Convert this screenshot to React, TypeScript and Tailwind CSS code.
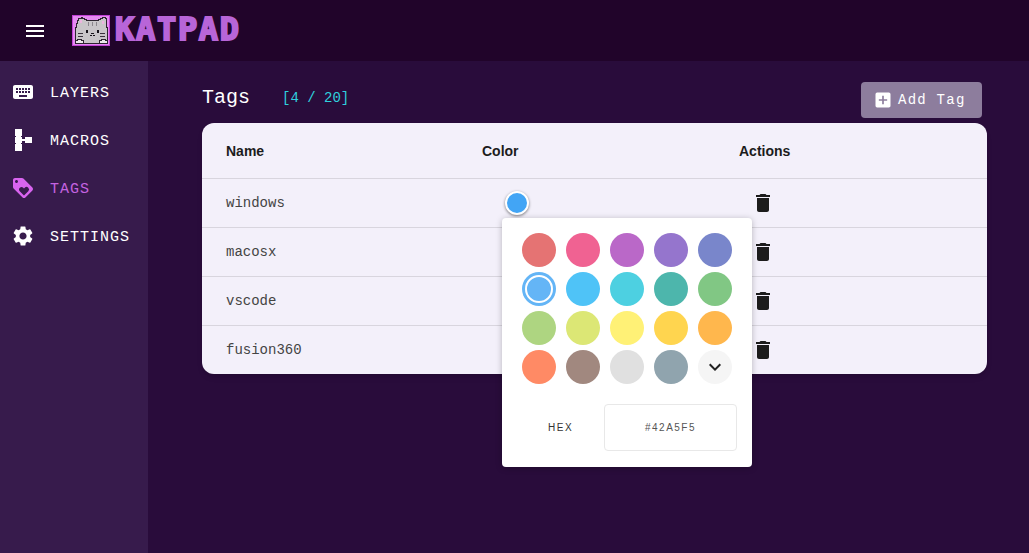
import { MdMenu, MdKeyboard, MdLoyalty, MdSettings, MdDelete, MdAddBox, MdKeyboardArrowDown } from "react-icons/md";

const navItems = [
    { label: "LAYERS", icon: <MdKeyboard size={24} /> },
    { label: "MACROS", icon: <MacroIcon /> },
    { label: "TAGS", icon: <MdLoyalty size={24} />, active: true },
    { label: "SETTINGS", icon: <MdSettings size={24} /> },
];

const tags = ["windows", "macosx", "vscode", "fusion360"];

const swatches = [
    "bg-[#e57373]", "bg-[#f06292]", "bg-[#ba68c8]", "bg-[#9575cd]", "bg-[#7986cb]",
    "selected", "bg-[#4fc3f7]", "bg-[#4dd0e1]", "bg-[#4db6ac]", "bg-[#81c784]",
    "bg-[#aed581]", "bg-[#dce775]", "bg-[#fff176]", "bg-[#ffd54f]", "bg-[#ffb74d]",
    "bg-[#ff8a65]", "bg-[#a1887f]", "bg-[#e0e0e0]", "bg-[#90a4ae]", "more",
];

function MacroIcon() {
    return (
        <svg width="24" height="24" viewBox="0 0 24 24" fill="currentColor" shapeRendering="crispEdges">
            <rect x="4" y="1" width="7" height="7" />
            <rect x="5" y="8" width="5" height="1" />
            <rect x="4" y="9" width="7" height="6" />
            <rect x="5" y="15" width="5" height="1" />
            <rect x="4" y="16" width="7" height="7" />
            <rect x="11" y="11" width="3" height="2" />
            <rect x="14" y="9" width="7" height="6" />
        </svg>
    );
}

function CatLogo() {
    return (
        <svg width="38" height="31" viewBox="0 0 38 31" shapeRendering="crispEdges" className="shrink-0">
            <rect x="0.5" y="0.5" width="37" height="30" fill="#e58bf2" stroke="#c23fd6" />
            <path d="M3 28v-16h1v-4h1v-3h1v-2h3v-1h1v1h2v1h2v1h12v-1h2v-1h2v-1h3v1h1v9h1v16z" fill="#c9c5c9" stroke="#2d2430" strokeWidth="1" />
            <path d="M3 28v-3h2v-1h4v1h2v3zM27 28v-3h2v-1h4v1h2v3z" fill="#ece9ec" stroke="#2d2430" strokeWidth="1" />
            <path d="M8 5h2v3h-2zM30 6h2v3h-2z" fill="#ecb4df" />
            <path d="M16 7h1v4h-1zM20 7h1v4h-1zM24 7h1v4h-1z" fill="#8b868d" />
            <path d="M14 15h2v3h-2zM25 15h2v3h-2z" fill="#17121a" />
            <path d="M19 18h3v1h-3zM18 20h2v1h-2zM21 20h2v1h-2z" fill="#17121a" />
            <path d="M6 18h5v1h-5zM6 21h5v1h-5zM28 18h5v1h-5zM28 21h5v1h-5z" fill="#3a323d" />
        </svg>
    );
}

function ColorPopover() {
    return (
        <div className="absolute left-[300px] top-[95px] z-10 w-[250px] h-[249px] rounded bg-white shadow-[0_1px_6px_rgba(0,0,0,0.25)] flex flex-col pt-[15px] pl-5 pr-[15px]">
            <div className="grid grid-cols-[repeat(5,34px)] gap-x-[10px] gap-y-[5px]">
                {swatches.map((s) =>
                    s === "selected" ? (
                        <div key={s} className="w-[34px] h-[34px] rounded-full bg-[#64b5f6] flex items-center justify-center">
                            <div className="w-[28px] h-[28px] rounded-full border-2 border-white" />
                        </div>
                    ) : s === "more" ? (
                        <div key={s} className="w-[34px] h-[34px] rounded-full bg-[#f5f5f5] flex items-center justify-center text-[#212121]">
                            <MdKeyboardArrowDown size={24} />
                        </div>
                    ) : (
                        <div key={s} className={`w-[34px] h-[34px] rounded-full ${s}`} />
                    )
                )}
            </div>
            <div className="flex items-center mt-[20px]">
                <div className="w-[82px] pl-[26px] text-[10px] tracking-[1.5px] text-[#333333] font-['Liberation_Sans',sans-serif]">HEX</div>
                <div className="w-[133px] h-[47px] rounded border border-[#e8e8e8] flex items-center justify-center text-[10px] tracking-[1.5px] text-[#555555] font-['Liberation_Sans',sans-serif]">
                    #42A5F5
                </div>
            </div>
        </div>
    );
}

export default function App() {
    return (
        <div className="w-[1029px] h-[553px] overflow-hidden flex flex-col bg-[#290c3b] font-['Liberation_Mono',monospace]">
            <header className="h-[61px] shrink-0 bg-[#21042a] flex items-center text-white">
                <div className="w-[72px] pl-[23px]">
                    <MdMenu size={24} />
                </div>
                <CatLogo />
                <span className="ml-[5px] mb-[3px] text-[32px] leading-none tracking-[1.7px] font-bold text-[#b865d8] font-['DejaVu_Sans_Mono',monospace] [-webkit-text-stroke:2px_#b865d8]">
                    KATPAD
                </span>
            </header>

            <div className="flex flex-1 min-h-0">
                <aside className="w-[148px] shrink-0 bg-[#371b4c] pt-[7px]">
                    {navItems.map((item) => (
                        <div
                            key={item.label}
                            className={`h-12 flex items-center pl-[11px] ${item.active ? "text-[#d864ef]" : "text-white"}`}
                        >
                            <span className="w-[39px]">{item.icon}</span>
                            <span className={`pt-[5px] text-[15px] tracking-[1px] ${item.active ? "text-[#c563e0]" : "text-white"}`}>{item.label}</span>
                        </div>
                    ))}
                </aside>

                <main className="flex-1 pl-[54px] pr-[42px] pt-[21px]">
                    <div className="h-[36px] flex items-center mb-[5px]">
                        <h1 className="text-[20px] text-white w-[80px] pb-[5px]">Tags</h1>
                        <span className="text-[14px] text-[#2fd0de] pb-[4px]">[4 / 20]</span>
                        <button className="ml-auto mr-[5px] w-[121px] h-[36px] rounded bg-[#8d7d9d] text-white flex items-center pl-[12px] text-[14px] tracking-[1.25px]">
                            <MdAddBox size={20} className="mr-[3px]" />
                            <span className="ml-[2px]">Add Tag</span>
                        </button>
                    </div>

                    <div className="relative bg-[#f3f0fa] rounded-xl shadow-md">
                        <div className="h-[56px] pt-[2px] flex items-center border-b border-[#d8d5de] text-[14px] font-bold text-[#1c1c1c] font-['Liberation_Sans',sans-serif]">
                            <div className="w-[280px] pl-6">Name</div>
                            <div className="w-[257px]">Color</div>
                            <div>Actions</div>
                        </div>
                        {tags.map((tag, i) => (
                            <div
                                key={tag}
                                className={`flex items-center text-[14px] text-[#444444] ${i < tags.length - 1 ? "h-[49px] border-b border-[#d8d5de]" : "h-[48px]"}`}
                            >
                                <div className="w-[280px] pl-6">{tag}</div>
                                <div className="w-[257px]">
                                    {i === 0 && (
                                        <div className="ml-[23px] w-6 h-6 rounded-full bg-[#42a5f5] border-2 border-white shadow-[0_1px_3px_rgba(0,0,0,0.5)]" />
                                    )}
                                </div>
                                <div className="text-[#1c1c1c] ml-[12px]">
                                    <MdDelete size={24} />
                                </div>
                            </div>
                        ))}
                        <ColorPopover />
                    </div>
                </main>
            </div>
        </div>
    );
}
